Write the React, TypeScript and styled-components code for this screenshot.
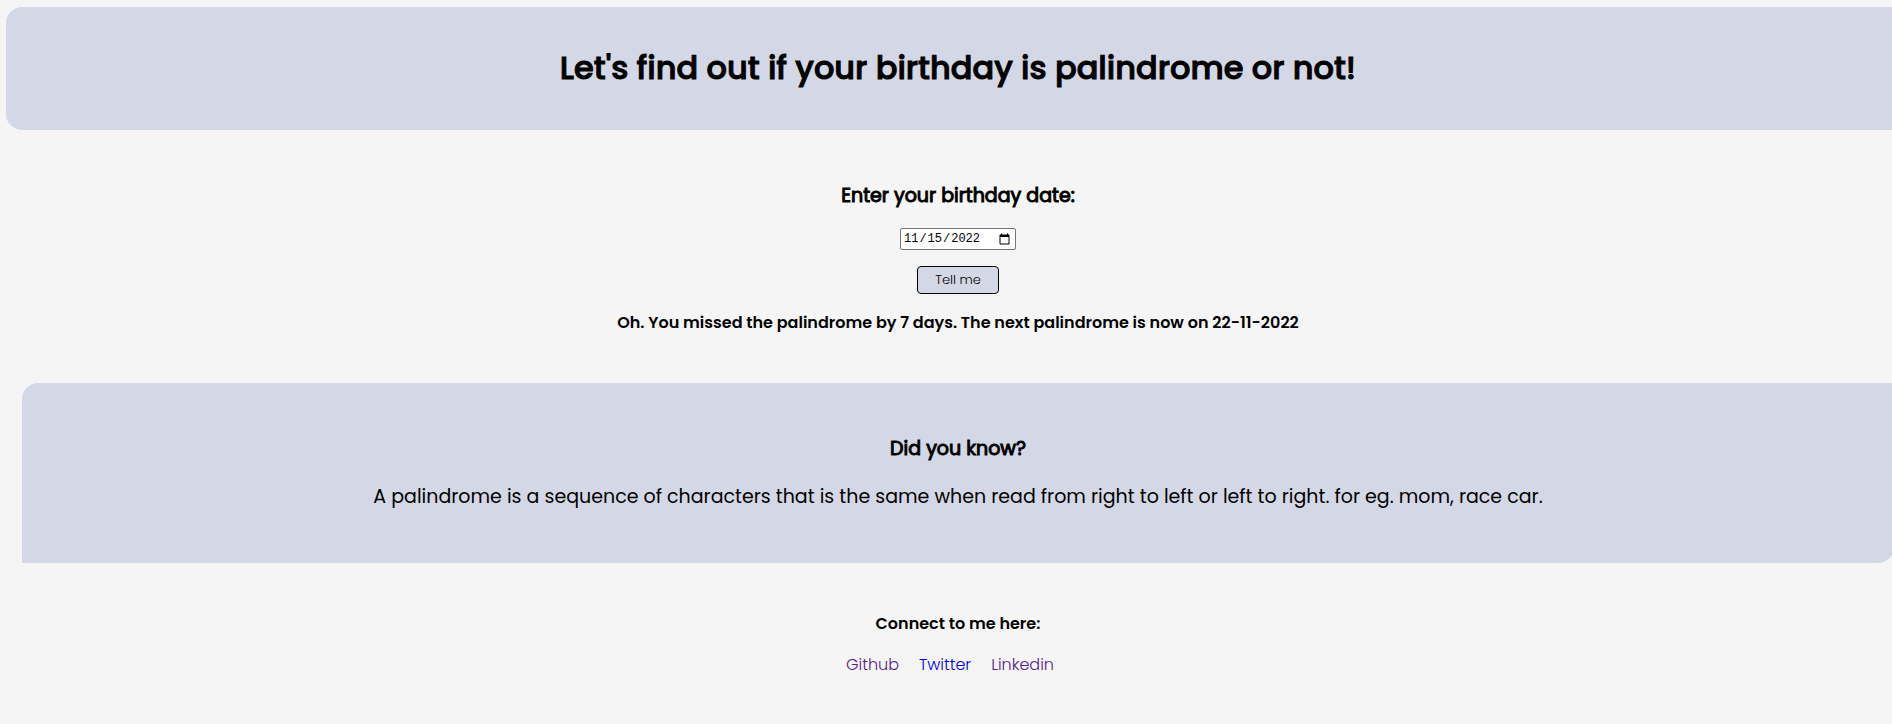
import React, { useState } from "react";
import styled, { createGlobalStyle } from "styled-components";

const GlobalStyle = createGlobalStyle`
  *, *::before, *::after { box-sizing: border-box; }
  body {
    margin: 0;
    overflow-x: hidden;
    background: #f5f5f5;
    color: #000;
    font-family: Poppins, Inter, "Open Sans", sans-serif;
    font-weight: 300;
  }
`;

const Page = styled.div`
  margin: 7px -18px 0 6px;
  text-align: center;
`;

const Header = styled.header`
  padding: 37px 16px 38px;
  border-radius: 16px;
  background: #d4d8e6;
`;

const Title = styled.h1`
  margin: 0;
  font-size: 32px;
  line-height: 48px;
  font-weight: 500;
  -webkit-text-stroke: 1px currentColor;
`;

const BirthdayForm = styled.form`
  display: flex;
  flex-direction: column;
  align-items: center;
  padding: 51px 16px 48px;
`;

const DateLabel = styled.label`
  margin-bottom: 17px;
  font-size: 19px;
  line-height: 30px;
  font-weight: 400;
  -webkit-text-stroke: 1px currentColor;
`;

const DateInput = styled.input`
  width: 116px;
  height: 22px;
  margin-bottom: 16px;
  padding: 0 2px;
  border: 1px solid #767676;
  border-radius: 2px;
  background: #fff;
  color: #000;
  font-family: Consolas, "Liberation Mono", monospace;
  font-size: 12px;

  &::-webkit-calendar-picker-indicator {
    width: 13px;
    height: 13px;
  }
`;

const SubmitButton = styled.button`
  height: 28px;
  width: 82px;
  margin-bottom: 17px;
  padding: 0;
  border: 1px solid #000;
  border-radius: 4px;
  background: #d4d8e6;
  color: #000;
  font-family: inherit;
  font-size: 13px;
  font-weight: 300;
  cursor: pointer;
`;

const Result = styled.output`
  display: block;
  font-size: 16px;
  line-height: 24px;
  font-weight: 600;
`;

const FactCard = styled.section`
  margin: 0 16px;
  padding: 51px 16px 50px;
  border-radius: 16px 0 16px 0;
  background: #d4d8e6;
`;

const FactHeading = styled.h2`
  margin: 0 0 17px;
  font-size: 19px;
  line-height: 30px;
  font-weight: 400;
  -webkit-text-stroke: 1px currentColor;
`;

const FactText = styled.p`
  margin: 0;
  font-size: 19px;
  line-height: 32px;
  font-weight: 400;
`;

const Footer = styled.footer`
  padding: 49px 16px;
`;

const FooterHeading = styled.h3`
  margin: 0 0 16px;
  font-size: 16px;
  line-height: 24px;
  font-weight: 600;
`;

const LinkList = styled.ul`
  display: flex;
  justify-content: center;
  gap: 20px;
  margin: 0;
  padding: 0 16px 0 0;
  list-style: none;
`;

const SocialLink = styled.a<{ $seen?: boolean }>`
  color: ${({ $seen }) => ($seen ? "#551a8b" : "#0000ee")};
  font-size: 16px;
  line-height: 24px;
  text-decoration: none;
`;

const links = [
  { name: "Github", href: "#github", seen: true },
  { name: "Twitter", href: "#twitter", seen: false },
  { name: "Linkedin", href: "#linkedin", seen: true },
];

export default function App() {
  const [date, setDate] = useState("2022-11-15");

  return (
    <>
      <GlobalStyle />
      <Page>
        <Header>
          <Title>Let's find out if your birthday is palindrome or not!</Title>
        </Header>
        <BirthdayForm onSubmit={(event) => event.preventDefault()}>
          <DateLabel htmlFor="birthday">Enter your birthday date:</DateLabel>
          <DateInput
            id="birthday"
            type="date"
            value={date}
            onChange={(event) => setDate(event.target.value)}
          />
          <SubmitButton type="submit">Tell me</SubmitButton>
          <Result htmlFor="birthday">
            Oh. You missed the palindrome by 7 days. The next palindrome is now on 22-11-2022
          </Result>
        </BirthdayForm>
        <FactCard>
          <FactHeading>Did you know?</FactHeading>
          <FactText>
            A palindrome is a sequence of characters that is the same when read from right to left
            or left to right. for eg. mom, race car.
          </FactText>
        </FactCard>
        <Footer>
          <FooterHeading>Connect to me here:</FooterHeading>
          <LinkList>
            {links.map(({ name, href, seen }) => (
              <li key={name}>
                <SocialLink href={href} $seen={seen}>
                  {name}
                </SocialLink>
              </li>
            ))}
          </LinkList>
        </Footer>
      </Page>
    </>
  );
}
